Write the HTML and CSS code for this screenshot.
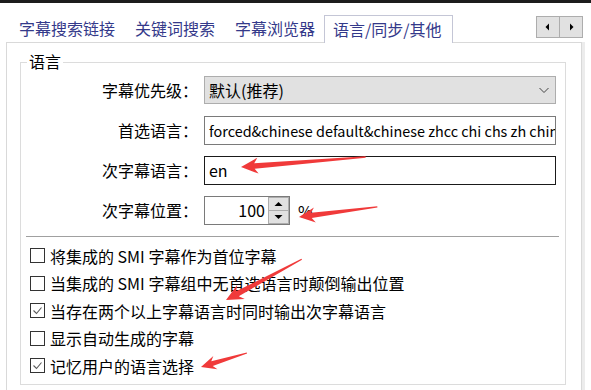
FILE: index.html
```html
<!DOCTYPE html>
<html lang="zh-CN">
<head>
<meta charset="utf-8">
<link rel="stylesheet" href="styles.css">
</head>
<body>
<div class="topbar"></div>
<div class="tabstrip">
  <div class="tab">字幕搜索链接</div>
  <div class="tab">关键词搜索</div>
  <div class="tab">字幕浏览器</div>
  <div class="tab active">语言/同步/其他</div>
  <div class="scroller">
    <span class="sbtn"><svg width="8" height="8" viewBox="0 0 8 8"><polygon points="5,0.5 5,7.5 1.5,4" fill="#000"/></svg></span>
    <span class="sbtn"><svg width="8" height="8" viewBox="0 0 8 8"><polygon points="3,0.5 3,7.5 6.5,4" fill="#000"/></svg></span>
  </div>
</div>
<div class="page">
  <div class="group">
    <div class="legend">语言</div>
    <div class="form">
      <div class="lbl">字幕优先级：</div>
      <div class="combo"><span>默认(推荐)</span>
        <svg class="chev" width="12" height="8" viewBox="0 0 12 8"><polyline points="1.5,2 6,6.5 10.5,2" fill="none" stroke="#444" stroke-width="1"/></svg>
      </div>
      <div class="lbl">首选语言：</div>
      <div class="edit latin">forced&amp;chinese default&amp;chinese zhcc chi chs zh chinese</div>
      <div class="lbl">次字幕语言：</div>
      <div class="edit focus">en</div>
      <div class="lbl">次字幕位置：</div>
      <div class="spinrow">
        <div class="spin">
          <div class="spinval">100</div>
          <div class="spinbtns">
            <span class="sb"><svg width="9" height="6" viewBox="0 0 9 6"><polygon points="0.5,5 8.5,5 4.5,1" fill="#000"/></svg></span>
            <span class="sb"><svg width="9" height="6" viewBox="0 0 9 6"><polygon points="0.5,1 8.5,1 4.5,5" fill="#000"/></svg></span>
          </div>
        </div>
        <span class="pct">%</span>
      </div>
    </div>
    <div class="sep"></div>
    <div class="checks">
      <div class="chk"><span class="box"></span><span>将集成的 SMI 字幕作为首位字幕</span></div>
      <div class="chk"><span class="box"></span><span>当集成的 SMI 字幕组中无首选语言时颠倒输出位置</span></div>
      <div class="chk"><span class="box"><svg width="13" height="13" viewBox="0 0 13 13"><polyline points="2.5,6.5 5.5,9.5 10.5,3.5" fill="none" stroke="#5a5a5a" stroke-width="1.1"/></svg></span><span>当存在两个以上字幕语言时同时输出次字幕语言</span></div>
      <div class="chk"><span class="box"></span><span>显示自动生成的字幕</span></div>
      <div class="chk"><span class="box"><svg width="13" height="13" viewBox="0 0 13 13"><polyline points="2.5,6.5 5.5,9.5 10.5,3.5" fill="none" stroke="#5a5a5a" stroke-width="1.1"/></svg></span><span>记忆用户的语言选择</span></div>
    </div>
  </div>
</div>
<svg class="arrows" width="591" height="390" viewBox="0 0 591 390">
  <g fill="#f03a3a">
    <polygon transform="translate(241,167) rotate(-4.6)" points="0,0 17,-8 13.5,-2.8 125,-0.7 125,0.7 13.5,2.8 17,8"/>
    <polygon transform="translate(299,217) rotate(-7.3)" points="0,0 16,-7.5 12.5,-2.6 79,-0.6 79,0.6 12.5,2.6 16,7.5"/>
    <polygon transform="translate(226,300) rotate(-28.3)" points="0,0 17,-8 13,-2.8 86,-0.6 86,0.6 13,2.8 17,8"/>
    <polygon transform="translate(201,367) rotate(-16.9)" points="0,0 15,-7 11.5,-2.5 48,-0.6 48,0.6 11.5,2.5 15,7"/>
  </g>
</svg>
</body>
</html>
```
FILE: styles.css
```css
* { box-sizing: border-box; }
html, body { margin: 0; padding: 0; }
body {
  width: 591px;
  height: 390px;
  overflow: hidden;
  position: relative;
  background: #ffffff;
  font-family: "Noto Sans CJK SC", "Noto Sans", sans-serif;
  font-size: 16px;
  color: #000;
}
.topbar { height: 3px; background: #1c1c1c; }
.tabstrip {
  height: 39px;
  display: flex;
  align-items: flex-end;
  padding-left: 9px;
}
.tab {
  height: 27px;
  line-height: 27px;
  padding: 0 10px;
  color: #34398a;
  white-space: nowrap;
}
.tab.active {
  position: relative;
  z-index: 1;
  height: 28px;
  line-height: 26px;
  margin-left: -1px;
  margin-bottom: -1px;
  padding: 0 10px 0 8px;
  border: 1px solid #c4c6d6;
  border-bottom: none;
  background: #fff;
}
.scroller {
  align-self: flex-start;
  margin-top: 13px;
  margin-left: auto;
  margin-right: 8px;
  display: flex;
}
.sbtn {
  width: 24px;
  height: 22px;
  border: 1px solid #adadad;
  background: #e1e1e1;
  display: flex;
  align-items: center;
  justify-content: center;
}
.sbtn + .sbtn { margin-left: -1px; }
.page {
  margin-left: 6px;
  width: 576px;
  height: 400px;
  border: 1px solid #d9d9d9;
  border-bottom: none;
  box-shadow: 3px 0 0 #ececec;
  padding-top: 19px;
  padding-left: 13px;
  padding-right: 15px;
}
.group {
  border: 1px solid #dcdcdc;
  padding-bottom: 4px;
}
.legend {
  width: fit-content;
  margin: -12px 0 0 6px;
  padding: 0 2px;
  line-height: 20px;
  background: #fff;
}
.form {
  margin-top: 5px;
  display: grid;
  grid-template-columns: 177px 352px;
  column-gap: 6px;
  row-gap: 11px;
  grid-auto-rows: 29px;
}
.lbl {
  text-align: right;
  line-height: 29px;
  white-space: nowrap;
}
.combo {
  height: 28px;
  border: 1px solid #adadad;
  background: #e1e1e1;
  display: flex;
  align-items: center;
  justify-content: space-between;
  padding: 0 5px 0 4px;
  line-height: 26px;
}
.edit {
  border: 1px solid #7a7a7a;
  padding: 0 4px;
  line-height: 27px;
  white-space: nowrap;
  overflow: hidden;
  background: #fff;
}
.edit.latin { font-size: 14.4px; }
.edit.focus { border-color: #1a1a1a; }
.spinrow { display: flex; align-items: center; }
.spin {
  width: 86px;
  height: 29px;
  border: 1px solid #7a7a7a;
  display: flex;
}
.spinval {
  flex: 1;
  text-align: right;
  padding-right: 3px;
  line-height: 27px;
}
.spinbtns {
  width: 21px;
  display: flex;
  flex-direction: column;
}
.sb {
  flex: 1;
  border: 1px solid #adadad;
  background: #e1e1e1;
  display: flex;
  align-items: center;
  justify-content: center;
}
.sb + .sb { margin-top: -1px; }
.pct { margin-left: 8px; }
.sep {
  height: 1px;
  margin: 11px 6px 0 5px;
  background: #a0a0a0;
}
.checks {
  margin-top: 5px;
  padding-left: 9px;
}
.chk {
  height: 27.5px;
  display: flex;
  align-items: center;
  white-space: nowrap;
}
.box {
  flex: none;
  width: 15px;
  height: 15px;
  border: 1px solid #333;
  margin-right: 5px;
  background: #fff;
  display: flex;
  align-items: center;
  justify-content: center;
}
.arrows {
  position: absolute;
  left: 0;
  top: 0;
  pointer-events: none;
}
```
